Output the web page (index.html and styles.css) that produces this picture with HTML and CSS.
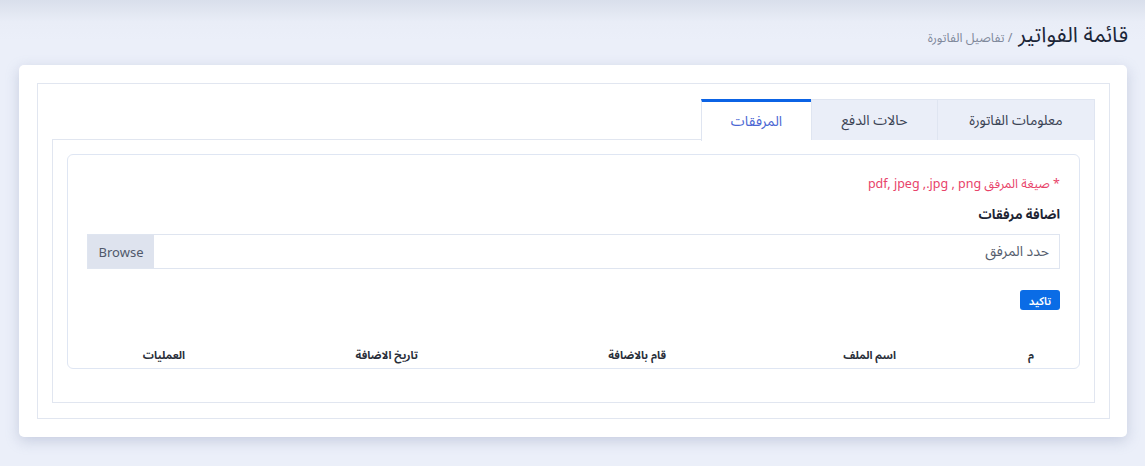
FILE: index.html
```html
<!DOCTYPE html>
<html lang="ar" dir="rtl">
<head>
<meta charset="utf-8">
<title>تفاصيل الفاتورة</title>
<link rel="stylesheet" href="styles.css">
</head>
<body>
<div class="page">
  <div class="header">
    <h1 class="title">قائمة الفواتير</h1>
    <span class="crumb">/ تفاصيل الفاتورة</span>
  </div>
  <div class="card">
    <div class="frame">
      <div class="tabs">
        <div class="tab">معلومات الفاتورة</div>
        <div class="tab">حالات الدفع</div>
        <div class="tab active">المرفقات</div>
      </div>
      <div class="tab-body">
        <div class="inner">
          <div class="hint">* صيغة المرفق pdf, jpeg ,.jpg , png</div>
          <div class="label">اضافة مرفقات</div>
          <div class="file">
            <span class="file-text">حدد المرفق</span>
            <span class="browse">Browse</span>
          </div>
          <div class="actions"><button class="btn">تاكيد</button></div>
          <div class="thead">
            <div class="th">م</div>
            <div class="th">اسم الملف</div>
            <div class="th">قام بالاضافة</div>
            <div class="th">تاريخ الاضافة</div>
            <div class="th">العمليات</div>
          </div>
        </div>
      </div>
    </div>
  </div>
</div>
</body>
</html>
```
FILE: styles.css
```css
* { box-sizing: border-box; }
html, body { margin: 0; }
body {
  direction: rtl;
  font-family: "Noto Sans", "Noto Sans Arabic", "Noto Kufi Arabic", "DejaVu Sans", sans-serif;
  background: linear-gradient(to bottom, #d9dfeb 0px, #e9edf7 22px, #ebeff9 40px);
  min-height: 466px;
  color: #1f2a3c;
}
.page { padding: 0 18px 0 19px; }
.header {
  display: flex;
  align-items: baseline;
  gap: 6px;
  padding: 20px 0 0 0;
  margin-right: -1px;
  height: 65px;
}
.title {
  margin: 0;
  font-size: 21.5px;
  font-weight: 400;
  color: #1c2638;
  line-height: 28px;
}
.crumb {
  font-size: 12.5px;
  color: #7f889b;
}
.card {
  background: #fff;
  border-radius: 5px;
  box-shadow: 0 4px 14px rgba(120, 135, 170, 0.32);
  padding: 18px 17px 18px 18px;
}
.frame {
  border: 1px solid #e1e6f0;
  padding: 15px 14px 15px 14px;
}
.tabs {
  display: flex;
  height: 41px;
  position: relative;
  z-index: 1;
}
.tab {
  height: 41px;
  display: flex;
  align-items: center;
  justify-content: center;
  background: #eaeef8;
  border: 1px solid #dfe5f1;
  border-bottom: none;
  font-size: 14px;
  color: #3a4354;
}
.tab:nth-child(1) { width: 158px; }
.tab:nth-child(2) { width: 126px; border-right: none; }
.tab.active {
  width: 110px;
  height: 42px;
  background: #fff;
  border-top: 3px solid #0b63e5;
  border-right: none;
  color: #4b67d3;
  padding-bottom: 1px;
}
.tab-body {
  border: 1px solid #e1e6f0;
  margin-top: -1px;
  padding: 14px 14px 33px 14px;
}
.inner {
  border: 1px solid #dfe6f3;
  border-radius: 6px;
  padding: 19px 19px 0 19px;
}
.hint {
  font-size: 12.5px;
  line-height: 20px;
  color: #e8436a;
}
.label {
  margin-top: 10px;
  font-size: 13px;
  font-weight: 700;
  line-height: 20px;
  color: #1d2433;
}
.file {
  margin-top: 10px;
  display: flex;
  height: 35px;
  border: 1px solid #dfe5f0;
}
.file-text {
  flex: 1;
  display: flex;
  align-items: center;
  padding-right: 10px;
  font-size: 14px;
  color: #555d6d;
}
.browse {
  width: 66px;
  display: flex;
  align-items: center;
  justify-content: center;
  background: #dee3ee;
  font-size: 13px;
  color: #50596b;
}
.actions { margin-top: 21px; display: flex; }
.btn {
  height: 20px;
  width: 40px;
  padding: 0;
  border: none;
  border-radius: 3px;
  background: #0a6ce6;
  color: #fff;
  font-family: inherit;
  font-size: 11px;
  font-weight: 600;
}
.thead {
  margin-top: 32px;
  margin-right: -19px;
  margin-left: -19px;
  display: grid;
  grid-template-columns: 157px 230px 248px 233px 1fr;
  height: 26px;
  align-items: center;
}
.th {
  padding-right: 45px;
  font-size: 11px;
  font-weight: 700;
  color: #2a2f3a;
}
.th:not(:first-child) { padding-right: 26px; }
```
